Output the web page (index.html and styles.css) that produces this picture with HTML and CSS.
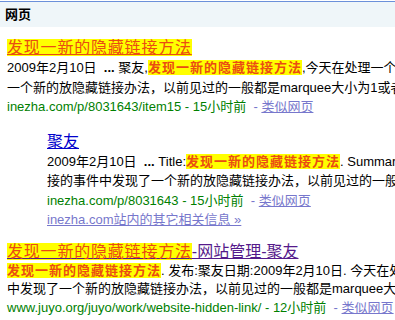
FILE: index.html
```html
<!DOCTYPE html>
<html lang="zh-CN">
<head>
    <meta charset="UTF-8">
    <title>网页</title>
    <link rel="stylesheet" href="styles.css">
</head>
<body>
    <div class="topbar">网页</div>

    <div class="results">
        <div class="result">
            <div class="title"><a href="#" class="hl-title">发现一新的隐藏链接方法</a></div>
            <div class="line">2009年2月10日&nbsp; <b>...</b> 聚友,<b class="hl">发现一新的隐藏链接方法</b>,今天在处理一个</div>
            <div class="line">一个新的放隐藏链接办法，以前见过的一般都是marquee大小为1或者</div>
            <div class="line"><span class="url">inezha.com/p/8031643/item15 - 15小时前</span>&nbsp; <span class="sep">-</span> <a href="#" class="fl">类似网页</a></div>
        </div>

        <div class="result indent">
            <div class="title"><a href="#" class="link">聚友</a></div>
            <div class="line">2009年2月10日&nbsp; <b>...</b> Title:<b class="hl">发现一新的隐藏链接方法</b>. Summary:今天在处理一个</div>
            <div class="line">接的事件中发现了一个新的放隐藏链接办法，以前见过的一般都是</div>
            <div class="line"><span class="url">inezha.com/p/8031643 - 15小时前</span>&nbsp; <span class="sep">-</span> <a href="#" class="fl">类似网页</a></div>
            <div class="line"><a href="#" class="fl">inezha.com站内的其它相关信息 &raquo;</a></div>
        </div>

        <div class="result last">
            <div class="title"><a href="#" class="visited"><span class="hl-title">发现一新的隐藏链接方法</span>-网站管理-聚友</a></div>
            <div class="line"><b class="hl">发现一新的隐藏链接方法</b>. 发布:聚友日期:2009年2月10日. 今天在处理一个</div>
            <div class="line">中发现了一个新的放隐藏链接办法，以前见过的一般都是marquee大小</div>
            <div class="line"><span class="url">www.juyo.org/juyo/work/website-hidden-link/ - 12小时前</span>&nbsp; <span class="sep">-</span> <a href="#" class="fl">类似网页</a></div>
        </div>
    </div>
</body>
</html>
```

FILE: styles.css
```css
body {
    margin: 0;
    font-family: "Liberation Sans", Arial, "Noto Sans CJK SC", sans-serif;
    font-size: 13px;
    color: #000;
    background: #fff;
    overflow: hidden;
}

.topbar {
    margin-top: 1px;
    border-top: 1px solid #6b90da;
    background-color: #eff6f9;
    height: 25px;
    line-height: 25px;
    padding-left: 5px;
    font-weight: bold;
}

.results {
    padding: 11px 0 0 7px;
}

.result {
    margin-bottom: 15px;
}

.indent {
    margin-left: 40px;
    margin-bottom: 12px;
}

.last .line {
    line-height: 18.5px;
}

.title {
    font-size: 16px;
    line-height: 20px;
    white-space: nowrap;
}

.line {
    line-height: 19.5px;
    white-space: nowrap;
}

a.link {
    color: #0000cc;
}

a.visited {
    color: #551a8b;
}

.hl-title {
    background-color: #ffff00;
    color: #ea4c12;
    letter-spacing: 0.8px;
    text-decoration-color: #d80000;
}

a.hl-title {
    text-decoration: underline;
}

.hl {
    background-color: #ffff00;
    color: #ea4c12;
    letter-spacing: 1px;
}

.url {
    color: #008000;
}

.sep {
    color: #7777cc;
}

a.fl {
    color: #7777cc;
}
```
